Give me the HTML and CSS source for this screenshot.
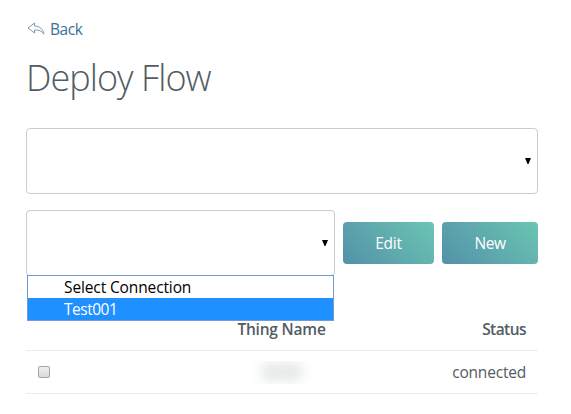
FILE: index.html
```html
<!DOCTYPE html>
<html lang="en">
<head>
<meta charset="utf-8">
<title>Deploy Flow</title>
<link rel="stylesheet" href="styles.css">
</head>
<body>
<main class="page">
  <a class="back">
    <svg class="back-icon" width="18" height="14" viewBox="0 0 18 14"><path d="M7.5 1 L1 6 L7.5 11 V8 C12 7.6 15 9.2 17 12.2 C16.4 7.3 12.5 4.1 7.5 4 Z"/></svg>
    <span class="back-label">Back</span>
  </a>
  <h1 class="title"><span>Deploy Flow</span></h1>
  <div class="select"><svg class="caret" width="6" height="6" viewBox="0 0 6 6"><path d="M0 0H6L3.5 6H2.5Z"/></svg></div>
  <div class="toolbar">
    <div class="select connection">
      <svg class="caret" width="6" height="6" viewBox="0 0 6 6"><path d="M0 0H6L3.5 6H2.5Z"/></svg>
      <div class="menu">
        <div class="option"><span class="t-select">Select Connection</span></div>
        <div class="option active"><span class="t-test">Test001</span></div>
      </div>
    </div>
    <div class="button edit"><span>Edit</span></div>
    <div class="button new"><span>New</span></div>
  </div>
  <div class="table">
    <div class="row head">
      <div class="check"></div>
      <div class="name"><span class="t-name">Thing Name</span></div>
      <div class="status"><span class="t-status">Status</span></div>
    </div>
    <div class="row">
      <div class="check"><span class="box"></span></div>
      <div class="name"><span class="redacted"><span class="smudge"></span></span></div>
      <div class="status"><span class="t-connected">connected</span></div>
    </div>
  </div>
</main>
</body>
</html>
```
FILE: styles.css
```css
* { box-sizing: border-box; }
body {
  margin: 0;
  background: #fff;
  color: #525c63;
  font: 15.5px/22px "Open Sans", "Noto Sans", sans-serif;
  letter-spacing: -0.2px;
}
.page { width: 512px; margin-left: 26px; padding-top: 18px; }
.back { display: flex; align-items: center; height: 22px; color: #38719b; }
.back-icon { margin: 0 5px 0 1px; fill: none; stroke: #6c8ca8; stroke-width: 0.9; stroke-linejoin: round; }
.back-label { letter-spacing: -0.4px; }
.title {
  height: 54px;
  margin: 11px 0 23px;
  font-size: 36px;
  font-weight: 300;
  line-height: 54px;
  letter-spacing: -0.95px;
}
.select {
  display: flex;
  align-items: center;
  justify-content: flex-end;
  position: relative;
  height: 66px;
  padding-right: 6px;
  border: 1px solid #c3ced6;
  border-radius: 4px;
}
.caret { fill: #000; }
.toolbar { display: flex; align-items: center; gap: 8px; margin-top: 16px; }
.connection { width: 309px; }
.menu {
  position: absolute;
  top: 64px;
  left: 0;
  z-index: 1;
  width: 307px;
  height: 46px;
  border: 1px solid #7598d8;
  background: #fff;
  color: #000;
}
.option { height: 22px; padding-left: 36px; line-height: 23px; white-space: nowrap; }
.option.active { background: #1e90ff; color: #fff; }
.t-select { letter-spacing: -0.12px; }
.t-test { letter-spacing: -0.5px; }
.button {
  display: flex;
  align-items: center;
  justify-content: center;
  height: 42px;
  border-radius: 4px;
  background: linear-gradient(45deg, #5391a9, #6bc5b2);
  color: #fff;
}
.edit { width: 91px; }
.new { width: 96px; letter-spacing: -0.4px; }
.table { margin-top: 32px; }
.row { display: flex; align-items: center; height: 43px; border-bottom: 1px solid #ebeded; }
.check { display: flex; width: 190px; padding-left: 12px; }
.name { display: flex; justify-content: center; width: 131px; }
.status { flex: 1; display: flex; justify-content: flex-end; padding-right: 12px; }
.head { font-weight: 600; }
.t-status { letter-spacing: -0.55px; }
.box {
  width: 12px;
  height: 12px;
  margin-top: -1px;
  border: 1px solid #a5a5a5;
  border-radius: 2px;
  background: linear-gradient(#eee, #dadada);
}
.redacted { display: flex; align-items: center; justify-content: center; width: 62px; height: 23px; overflow: hidden; }
.smudge { width: 40px; height: 18px; background: #e6e9e9; filter: blur(6px); }
```
